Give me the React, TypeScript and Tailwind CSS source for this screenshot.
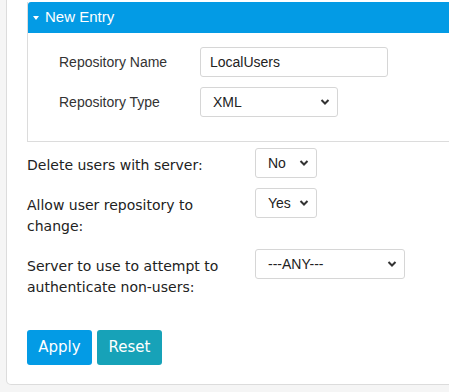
import { useState } from "react";

const Chevron = () => (
  <svg
    className="pointer-events-none absolute right-[8px] top-1/2 -translate-y-1/2"
    width="10"
    height="7"
    viewBox="0 0 10 7"
  >
    <path d="M1.5 1.5 L5 5 L8.5 1.5" fill="none" stroke="#333" strokeWidth="2" />
  </svg>
);

const Select = ({ value, options, w }: { value: string; options: string[]; w: string }) => {
  const [val, setVal] = useState(value);
  return (
    <div className={`relative h-[30px] ${w}`}>
      <select
        value={val}
        onChange={(e) => setVal(e.target.value)}
        className="h-full w-full appearance-none rounded-[3px] border border-[#d6d6d6] bg-white pl-[12px] text-[14px] text-[#222] font-['Liberation_Sans',Arial,sans-serif] outline-none"
      >
        {options.map((o) => (
          <option key={o}>{o}</option>
        ))}
      </select>
      <Chevron />
    </div>
  );
};

const App = () => {
  return (
    <div className="h-[392px] w-[449px] overflow-hidden bg-[#f5f5f5]">
      {/* card */}
      <div className="ml-[6px] h-[385px] w-[470px] rounded-b-[5px] border border-t-0 border-[#dcdcdc] bg-white pl-[20px] pt-[2px]">
        {/* new entry panel */}
        <div className="border-b border-l border-[#dcdcdc]">
          <div className="flex h-[31px] items-center rounded-tl-[3px] bg-[#039be5] pl-[5px] text-[15px] text-white font-['Liberation_Sans',Arial,sans-serif]">
            <span className="mr-[6px] mt-[1px] h-0 w-0 border-x-[3.5px] border-t-[4px] border-x-transparent border-t-white" />
            New Entry
          </div>
          <div className="flex flex-col gap-[10px] pb-[24px] pl-[31px] pt-[14px] text-[14px] text-[#333] font-['Liberation_Sans',Arial,sans-serif]">
            <div className="flex items-center">
              <span className="w-[141px]">Repository Name</span>
              <input
                defaultValue="LocalUsers"
                className="h-[30px] w-[188px] rounded-[3px] border border-[#d6d6d6] px-[9px] text-[14px] text-[#222] outline-none"
              />
            </div>
            <div className="flex items-center">
              <span className="w-[141px]">Repository Type</span>
              <Select value="XML" options={["XML", "LDAP", "Database"]} w="w-[138px]" />
            </div>
          </div>
        </div>

        {/* settings */}
        <div className="mt-[6px] flex flex-col gap-[10px] text-[14px] text-[#222] font-['DejaVu_Sans',Verdana,sans-serif]">
          <div className="flex items-start">
            <span className="w-[228px] pb-[2px] pt-[7px] leading-[21px]">Delete users with server:</span>
            <Select value="No" options={["No", "Yes"]} w="w-[62px]" />
          </div>
          <div className="flex items-start">
            <span className="w-[210px] pb-[2px] pt-[7px] leading-[21px]">Allow user repository to change:</span>
            <span className="w-[18px]" />
            <Select value="Yes" options={["Yes", "No"]} w="w-[62px]" />
          </div>
          <div className="flex items-start">
            <span className="w-[210px] pb-[2px] pt-[7px] leading-[21px]">Server to use to attempt to authenticate non-users:</span>
            <span className="w-[18px]" />
            <Select value="---ANY---" options={["---ANY---"]} w="w-[150px]" />
          </div>
        </div>

        {/* buttons */}
        <div className="mt-[30px] flex gap-[5px] text-[15px] text-white font-['DejaVu_Sans',Verdana,sans-serif]">
          <button className="h-[35px] w-[65px] rounded-[3px] bg-[#039be5]">Apply</button>
          <button className="h-[35px] w-[65px] rounded-[3px] bg-[#17a2b8]">Reset</button>
        </div>
      </div>
    </div>
  );
};

export default App;
